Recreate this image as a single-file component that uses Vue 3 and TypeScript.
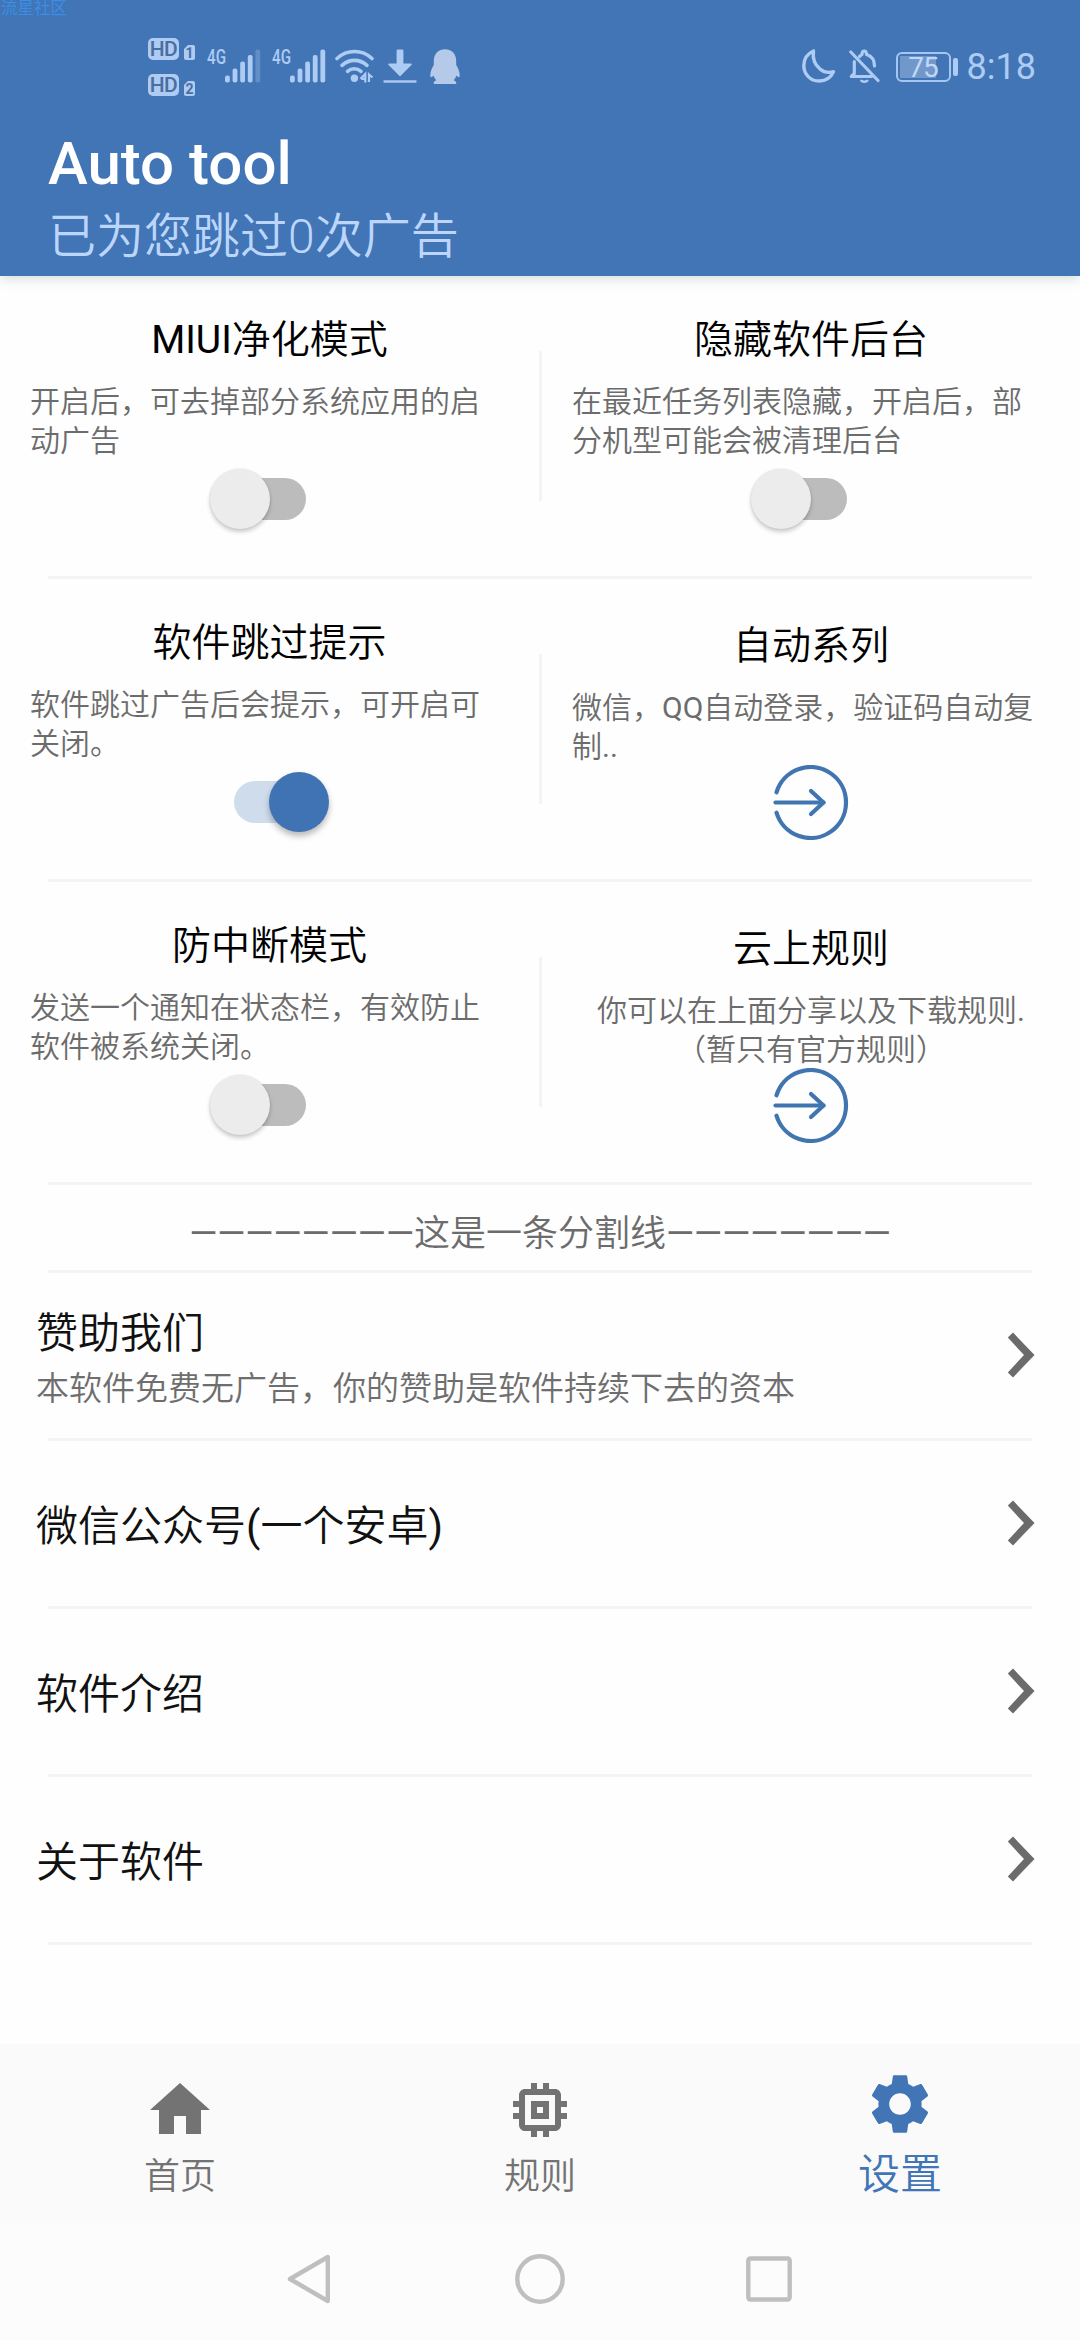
<script setup lang="ts">
interface Feature {
  title: string
  lines: string[]
  kind: 'switch' | 'link'
  on?: boolean
  centered?: boolean
}

interface Entry {
  title: string
  note?: string
}

interface Tab {
  label: string
  icon: string
  active?: boolean
}

interface Run {
  text: string
  latin: boolean
}

const rows: Feature[][] = [
  [
    { title: 'MIUI净化模式', lines: ['开启后，可去掉部分系统应用的启', '动广告'], kind: 'switch' },
    { title: '隐藏软件后台', lines: ['在最近任务列表隐藏，开启后，部', '分机型可能会被清理后台'], kind: 'switch' },
  ],
  [
    { title: '软件跳过提示', lines: ['软件跳过广告后会提示，可开启可', '关闭。'], kind: 'switch', on: true },
    { title: '自动系列', lines: ['微信，QQ自动登录，验证码自动复', '制..'], kind: 'link' },
  ],
  [
    { title: '防中断模式', lines: ['发送一个通知在状态栏，有效防止', '软件被系统关闭。'], kind: 'switch' },
    { title: '云上规则', lines: ['你可以在上面分享以及下载规则.', '（暂只有官方规则）'], kind: 'link', centered: true },
  ],
]

const dashes = '—'.repeat(8)

const entries: Entry[] = [
  { title: '赞助我们', note: '本软件免费无广告，你的赞助是软件持续下去的资本' },
  { title: '微信公众号(一个安卓)' },
  { title: '软件介绍' },
  { title: '关于软件' },
]

const tabs: Tab[] = [
  { label: '首页', icon: 'M10 20v-6h4v6h5v-8h3L12 3 2 12h3v8z' },
  {
    label: '规则',
    icon: 'M15 9H9v6h6V9zm-2 4h-2v-2h2v2zm8-2V9h-2V7c0-1.1-.9-2-2-2h-2V3h-2v2h-2V3H9v2H7c-1.1 0-2 .9-2 2v2H3v2h2v2H3v2h2v2c0 1.1.9 2 2 2h2v2h2v-2h2v2h2v-2h2c1.1 0 2-.9 2-2v-2h2v-2h-2v-2h2zm-4 6H7V7h10v10z',
  },
  {
    label: '设置',
    active: true,
    icon: 'M19.14,12.94c0.04-0.3,0.06-0.61,0.06-0.94c0-0.32-0.02-0.64-0.07-0.94l2.03-1.58c0.18-0.14,0.23-0.41,0.12-0.61l-1.92-3.32c-0.12-0.22-0.37-0.29-0.59-0.22l-2.39,0.96c-0.5-0.38-1.03-0.7-1.62-0.94L14.4,2.81c-0.04-0.24-0.24-0.41-0.48-0.41h-3.84c-0.24,0-0.43,0.17-0.47,0.41L9.25,5.35C8.66,5.59,8.12,5.92,7.63,6.29L5.24,5.33c-0.22-0.08-0.47,0-0.59,0.22L2.74,8.87C2.62,9.08,2.66,9.34,2.86,9.48l2.03,1.58C4.84,11.36,4.8,11.69,4.8,12s0.02,0.64,0.07,0.94l-2.03,1.58c-0.18,0.14-0.23,0.41-0.12,0.61l1.92,3.32c0.12,0.22,0.37,0.29,0.59,0.22l2.39-0.96c0.5,0.38,1.03,0.7,1.62,0.94l0.36,2.54c0.05,0.24,0.24,0.41,0.48,0.41h3.84c0.24,0,0.44-0.17,0.47-0.41l0.36-2.54c0.59-0.24,1.13-0.56,1.62-0.94l2.39,0.96c0.22,0.08,0.47,0,0.59-0.22l1.92-3.32c0.12-0.22,0.07-0.47-0.12-0.61L19.14,12.94z M12,15.6c-1.98,0-3.6-1.62-3.6-3.6s1.62-3.6,3.6-3.6s3.6,1.62,3.6,3.6S13.98,15.6,12,15.6z',
  },
]

// Heights of the five signal bars, shortest first.
const bars = [7, 14, 21, 27.5, 33]

// Latin runs are set in regular weight beside the lighter Chinese text.
function runs(text: string): Run[] {
  return (text.match(/[\x20-\x7e—]+|[^\x20-\x7e—]+/g) ?? []).map((part) => ({
    text: part,
    latin: /^[\x20-\x7e—]/.test(part),
  }))
}
</script>

<template>
  <div class="screen">
    <header class="header">
      <span class="watermark">流星社区</span>
      <div class="status">
        <div class="status-left">
          <div class="hd-stack">
            <div v-for="n in 2" :key="n" class="hd">
              <span class="hd-box">HD</span>
              <span class="sim">{{ n }}</span>
            </div>
          </div>
          <div v-for="n in 2" :key="n" class="signal">
            <span class="net">4G</span>
            <svg class="bars" width="36" height="34" viewBox="0 0 36 34">
              <rect
                v-for="(h, i) in bars"
                :key="i"
                :x="i * 7.6"
                :y="33.5 - h"
                width="4.8"
                :height="h"
                rx="2"
                :opacity="n === 1 && i === 4 ? 0.3 : 1"
                fill="currentColor"
              />
            </svg>
          </div>
          <svg class="wifi" width="39" height="34" viewBox="0 0 39 34" fill="none" stroke="currentColor" stroke-width="3.6" stroke-linecap="round">
            <path d="M2 9.5C12 .2 27 .2 37 9.5" />
            <path d="M7 16.3C14.5 9.7 24.5 9.7 32 16.3" />
            <path d="M12.5 22.3C16.500 18.8 22 18.8 26 22.3" />
            <circle cx="19.4" cy="29.3" r="3.7" fill="currentColor" stroke="none" />
            <path d="M25.5 29.8L30.3 25v8.6M30.3 29.800h-4M34 33v-7.5l3.500 3" stroke-width="2.2" stroke-linecap="butt" />
          </svg>
          <svg class="download" width="34" height="35" viewBox="0 0 34 35" fill="currentColor">
            <path d="M13.6 1.5q0-1 1-1h4.800q1 0 1 1V14.500h7.400q2 0 .6 1.500L17 27.500 5.600 16q-1.400-1.500.6-1.500h7.400z" />
            <rect x=".5" y="31.3" width="33" height="2.4" />
          </svg>
          <svg class="penguin" width="30" height="36" viewBox="0 0 30 36" fill="currentColor">
            <path d="M15 .3C7.500.3 3.800 5.500 3.800 12v4C2 18.500.3 23 .3 26c0 3 1.200 3 3.200.6.6 1.800 1.500 3.300 2.800 4.600-1.600.6-2.600 1.600-2.600 3 0 .6.4.9 1 .9h20.600c.6 0 1-.3 1-.9 0-1.400-1-2.400-2.600-3 1.300-1.300 2.200-2.800 2.800-4.600 2 2.400 3.200 2.400 3.200-.6 0-3-1.700-7.500-3.500-10v-4C26.200 5.500 22.500.3 15 .3z" />
          </svg>
        </div>
        <div class="status-right">
          <svg class="moon" width="34" height="34" viewBox="0 0 34 34" fill="none" stroke="currentColor" stroke-width="3.4" stroke-linejoin="round">
            <path d="M11.500 2C5 5 1.800 10.500 1.800 16.500 1.800 25.500 8.500 32 17 32c6.500 0 12-3.500 14.500-9.300-4.500 1.300-9.500.8-13.500-2.700C12.500 15.500 10.500 9 11.500 2z" />
          </svg>
          <svg class="bell" width="31" height="34" viewBox="0 0 31 34" fill="none" stroke="currentColor" stroke-width="3.2" stroke-linecap="round" stroke-linejoin="round">
            <path d="M5.300 12.500V24.500L2.300 27.500H22.500" />
            <path d="M10.500 7.500Q12 6 13 5.500C13 .8 17.500.8 17.500 5.500 22.500 7 25.500 10.500 25.500 17" />
            <path d="M1.800 3L29 31.500" />
            <path d="M12.300 31.700q3 2 6 0" stroke-width="2.4" />
          </svg>
          <div class="battery">
            <div class="battery-body">
              <span class="battery-fill"></span>
              <span class="battery-text">75</span>
            </div>
            <span class="battery-cap"></span>
          </div>
          <span class="clock">8:18</span>
        </div>
      </div>
      <h1 class="app-title">Auto tool</h1>
      <p class="app-sub">已为您跳过0次广告</p>
    </header>

    <main class="content">
      <section v-for="(row, r) in rows" :key="r" class="feature-row">
        <template v-for="(f, i) in row" :key="f.title">
          <span v-if="i" class="separator"></span>
          <div class="feature" :class="[f.kind, { centered: f.centered }]">
            <h2 class="feature-title"><span v-for="(p, k) in runs(f.title)" :key="k" :class="{ latin: p.latin }">{{ p.text }}</span></h2>
            <div class="feature-desc">
              <p v-for="l in f.lines" :key="l"><span v-for="(p, k) in runs(l)" :key="k" :class="{ latin: p.latin }">{{ p.text }}</span></p>
            </div>
            <div v-if="f.kind === 'switch'" class="toggle" :class="{ on: f.on }">
              <span class="thumb"></span>
            </div>
            <svg v-else class="enter" width="76" height="75" viewBox="0 0 76 75" fill="none" stroke="currentColor" stroke-width="4.2" stroke-linecap="round" stroke-linejoin="round">
              <path d="M3.500 27.300A35.500 35.500 0 1 1 3.500 47.700" />
              <path d="M2.500 37.500H50.500" />
              <path d="M38 26L50.500 37.500L38 49" />
            </svg>
          </div>
        </template>
      </section>

      <p class="split"><span class="latin">{{ dashes }}</span>这是一条分割线<span class="latin">{{ dashes }}</span></p>

      <section v-for="e in entries" :key="e.title" class="entry" :class="{ noted: e.note }">
        <div class="entry-text">
          <h3 class="entry-title"><span v-for="(p, k) in runs(e.title)" :key="k" :class="{ latin: p.latin }">{{ p.text }}</span></h3>
          <p v-if="e.note" class="entry-note">{{ e.note }}</p>
        </div>
        <svg class="chevron" width="28" height="46" viewBox="0 0 28 46">
          <path d="M.8 5.600L6 .5L27.500 23L6 45.500L.8 40.400L17 23z" fill="currentColor" />
        </svg>
      </section>
    </main>

    <nav class="tabs">
      <div v-for="t in tabs" :key="t.label" class="tab" :class="{ active: t.active }">
        <svg width="72" height="72" viewBox="0 0 24 24"><path :d="t.icon" fill="currentColor" /></svg>
        <span>{{ t.label }}</span>
      </div>
    </nav>

    <footer class="system-nav">
      <svg width="50" height="52" viewBox="0 0 50 52"><path d="M41.800 4V48L4 26z" /></svg>
      <svg width="52" height="52" viewBox="0 0 52 52"><circle cx="26" cy="26" r="22.7" /></svg>
      <svg width="50" height="52" viewBox="0 0 50 52"><rect x="4.300" y="5.500" width="41.400" height="41" rx="2" /></svg>
    </footer>
  </div>
</template>

<style>
body {
  margin: 0;
  background: #fff;
}
</style>

<style scoped>
.screen {
  width: 1080px;
  height: 2340px;
  display: flex;
  flex-direction: column;
  overflow: hidden;
  background: #fefefe;
  font-family: Roboto, "Noto Sans CJK SC", sans-serif;
  font-weight: 350;
}
h1, h2, h3, p {
  margin: 0;
  font-weight: inherit;
  white-space: nowrap;
}
svg {
  display: block;
  flex: none;
}
.latin {
  font-weight: 400;
}

.header {
  position: relative;
  z-index: 1;
  flex: none;
  height: 276px;
  background: #4175b5;
  box-shadow: 0 2px 12px rgba(40, 60, 80, 0.2);
}
.watermark {
  position: absolute;
  left: 1px;
  top: 0;
  font-size: 16.500px;
  line-height: 17px;
  font-weight: 400;
  color: #3b8de6;
}
.status {
  height: 128px;
  display: flex;
  justify-content: space-between;
  color: #adcbf3;
}
.status-left {
  display: flex;
  padding: 38px 0 0 148px;
}
.hd-stack {
  display: flex;
  flex-direction: column;
  gap: 14px;
  width: 59px;
}
.hd {
  display: flex;
  align-items: flex-end;
  gap: 5px;
  height: 22px;
}
.hd-box {
  width: 31px;
  height: 22px;
  border-radius: 5px;
  text-align: center;
  font-size: 21px;
  line-height: 23px;
  font-weight: 500;
  letter-spacing: -0.5px;
  background: #adcbf3;
  color: #4a6f9f;
}
.sim {
  width: 11px;
  height: 15px;
  border-radius: 2px;
  clip-path: polygon(0 4px, 4px 0, 100% 0, 100% 100%, 0 100%);
  font-size: 14px;
  line-height: 16px;
  font-weight: 700;
  text-align: center;
  background: #adcbf3;
  color: #4a6f9f;
}
.signal {
  display: flex;
  width: 65px;
  padding-top: 11px;
}
.net {
  width: 18px;
  font-size: 20px;
  line-height: 16px;
  font-weight: 500;
  transform: scaleX(0.76);
  transform-origin: left;
}
.wifi {
  margin: 11px 0 0 -2px;
}
.download {
  margin: 11px 0 0 9px;
}
.penguin {
  margin: 11px 0 0 13px;
  color: #b5c9e8;
}
.status-right {
  display: flex;
  padding: 49px 44px 0 0;
}
.bell {
  margin-left: 13px;
}
.battery {
  display: flex;
  align-items: center;
  gap: 2px;
  height: 29px;
  margin: 3px 0 0 16px;
}
.battery-body {
  position: relative;
  width: 55px;
  height: 30px;
  box-sizing: border-box;
  border: 2px solid #a5c6f2;
  border-radius: 6px;
}
.battery-fill {
  position: absolute;
  left: 2px;
  top: 2px;
  width: 36px;
  height: 22px;
  background: #7198c9;
}
.battery-text {
  position: absolute;
  inset: 0;
  text-align: center;
  font-size: 28px;
  line-height: 27px;
  font-weight: 400;
  letter-spacing: -1px;
  color: #bfd8fa;
}
.battery-cap {
  width: 5px;
  height: 18px;
  border-radius: 2px;
  background: #adcbf3;
}
.clock {
  margin-left: 9px;
  font-size: 36px;
  line-height: 36px;
  font-weight: 400;
}
.app-title {
  padding-left: 48px;
  font-size: 60px;
  line-height: 71px;
  font-weight: 500;
  color: #fff;
}
.app-sub {
  margin-top: 8px;
  padding-left: 48px;
  font-size: 48px;
  line-height: 60px;
  color: #bcd6fb;
}

.content {
  flex: 1;
}
.feature-row,
.split,
.entry {
  position: relative;
  margin-bottom: 3px;
}
.feature-row::after,
.split::after,
.entry::after {
  content: "";
  position: absolute;
  left: 48px;
  right: 48px;
  top: 100%;
  height: 3px;
  background: #f4f4f4;
}
.feature-row {
  display: flex;
  align-items: center;
  height: 300px;
}
.separator {
  width: 3px;
  height: 150px;
  background: #f4f4f4;
}
.feature {
  width: 539px;
  height: 300px;
  box-sizing: border-box;
  padding-top: 38px;
  display: flex;
  flex-direction: column;
  align-items: center;
}
.separator + .feature {
  width: 538px;
}
.feature.link {
  padding-top: 41px;
}
.feature-title {
  font-size: 39px;
  line-height: 52px;
  color: #000;
}
.feature-desc {
  align-self: stretch;
  margin: 16px 0 9px;
  padding-left: 30px;
  display: flex;
  flex-direction: column;
  font-size: 30px;
  line-height: 39px;
  color: #6c6c6c;
}
.link .feature-desc {
  margin-bottom: -1px;
}
.centered .feature-desc {
  padding-left: 0;
  align-items: center;
}
.toggle {
  display: flex;
  align-items: center;
  width: 72px;
  height: 42px;
  margin-top: 9px;
  border-radius: 21px;
  background: #bcbcbc;
}
.thumb {
  flex: none;
  width: 60px;
  height: 60px;
  margin-left: -24px;
  border-radius: 50%;
  background: #ececec;
  box-shadow: 0 3px 4px rgba(0, 0, 0, 0.2), 0 0 2px rgba(0, 0, 0, 0.12);
}
.toggle.on {
  background: #cedcec;
}
.on .thumb {
  margin-left: 35px;
  background: #3f73b3;
  box-shadow: 0 4px 6px rgba(0, 0, 0, 0.28);
}
.enter {
  color: #4175b0;
}

.split {
  box-sizing: border-box;
  height: 85px;
  padding-top: 28px;
  font-size: 36px;
  line-height: 42px;
  text-align: center;
  color: #6c6c6c;
}
.entry {
  box-sizing: border-box;
  height: 165px;
  padding: 0 45px 0 36px;
  display: flex;
  align-items: center;
  justify-content: space-between;
}
.entry-text {
  padding-top: 6px;
}
.noted .entry-text {
  padding-top: 8px;
}
.entry-title {
  font-size: 42px;
  line-height: 50px;
  color: #111;
}
.entry-note {
  margin-top: 9px;
  font-size: 33px;
  line-height: 42px;
  color: #6e6e6e;
}
.chevron {
  margin-bottom: 1px;
  color: #6b6b6b;
}

.tabs {
  flex: none;
  height: 177px;
  display: flex;
  background: #fafafa;
}
.tab {
  flex: 1;
  display: flex;
  flex-direction: column;
  align-items: center;
  gap: 10px;
  padding-top: 30px;
  font-size: 36px;
  line-height: 42px;
  color: #737373;
}
.tab.active {
  padding-top: 24px;
  gap: 11px;
  font-size: 42px;
  line-height: 48px;
  color: #4175b5;
}
.system-nav {
  flex: none;
  height: 119px;
  display: flex;
  align-items: center;
  justify-content: center;
  gap: 178px;
  padding-bottom: 4px;
  box-sizing: border-box;
  background: #fcfcfc;
}
.system-nav svg {
  fill: none;
  stroke: #bfbfbf;
  stroke-width: 4.4;
  stroke-linejoin: round;
}
</style>
